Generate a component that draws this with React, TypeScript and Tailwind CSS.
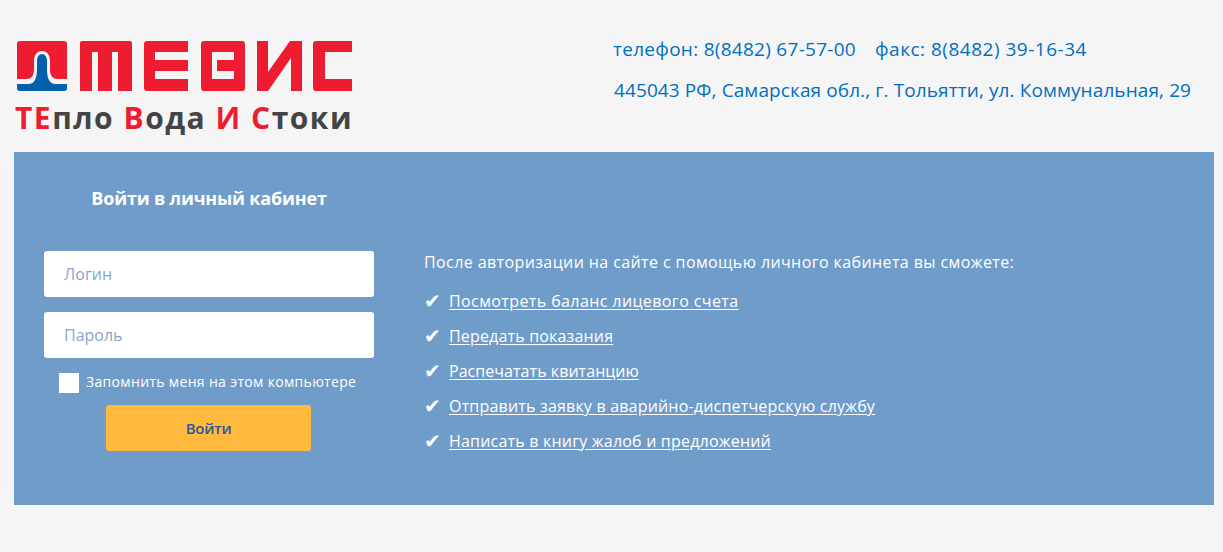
import React from "react";

function Logo() {
  return (
    <svg width="340" height="54" viewBox="15 39 340 54" className="block">
      {/* mark */}
      <rect x="17" y="41" width="50" height="50" rx="3" fill="#ee1c30" />
      <path d="M17 79 H26 C33 79 34 74 34 68 V61 C34 55 37 51 42 51 C47 51 50 55 50 61 V68 C50 74 51 79 58 79 H67 V88 Q67 91 64 91 H20 Q17 91 17 88 Z" fill="#f5f5f5" />
      <path d="M17 84 H28 C36 84 37 76 37 68 V61 C37 57 39 54 42 54 C45 54 47 57 47 61 V68 C47 76 48 84 56 84 H67 V88 Q67 91 64 91 H20 Q17 91 17 88 Z" fill="#0560ab" />
      {/* Т */}
      <path d="M82 41 H130 Q132 41 132 43 V91 H118 V52 H112 V91 H98 V52 H92 V91 H80 V43 Q80 41 82 41 Z" fill="#ee1c30" />
      {/* Е */}
      <path d="M147 41 H188 V52 H155 V60 H188 V71 H155 V79 H188 V91 H147 Q144 91 144 88 V44 Q144 41 147 41 Z" fill="#ee1c30" />
      {/* В */}
      <path fillRule="evenodd" d="M204 41 H242 Q245 41 245 44 V88 Q245 91 242 91 H204 Q201 91 201 88 V44 Q201 41 204 41 Z M212 52 V79 H234 V71 H217 V60 H234 V52 Z" fill="#ee1c30" />
      {/* И */}
      <path d="M257 41 H268 V72 L290 41 H302 V91 H291 V58 L268 91 H257 Z" fill="#ee1c30" />
      {/* С */}
      <path d="M316 41 H352 V52 H325 V79 H352 V91 H316 Q313 91 313 88 V44 Q313 41 316 41 Z" fill="#ee1c30" />
    </svg>
  );
}

function Item({ children, track }: { children: React.ReactNode; track: string }) {
  return (
    <li className="flex h-[35px] items-center">
      <span className="w-[25px] shrink-0 text-[20px] leading-[20px] font-['DejaVu_Sans',sans-serif]">✔</span>
      <a href="#" className={`text-[16px] leading-[20px] text-white underline underline-offset-2 ${track}`}>
        {children}
      </a>
    </li>
  );
}

export default function App() {
  return (
    <div className="min-h-[552px] bg-[#f5f5f5] font-['Open_Sans',sans-serif]">
      <header className="flex h-[152px]">
        <div className="w-[613px] shrink-0 pl-[15px] pt-[39px]">
          <Logo />
          <div className="mt-[7px] whitespace-nowrap text-[30px] font-bold leading-[36px] tracking-[1.5px] text-[#444]">
            <span className="text-[#ee1c30]">ТЕ</span>пло <span className="text-[#ee1c30]">В</span>ода{" "}
            <span className="text-[#ee1c30]">И</span> <span className="text-[#ee1c30]">С</span>токи
          </div>
        </div>
        <div className="whitespace-nowrap pt-[34px] text-[19px] leading-[30px] text-[#006fbe]">
          <div className="flex gap-[19px]">
            <span className="tracking-[0.28px]">телефон: 8(8482) 67-57-00</span>
            <span className="tracking-[0.5px]">факс: 8(8482) 39-16-34</span>
          </div>
          <div className="ml-px mt-[11px] tracking-[0.1px]">445043 РФ, Самарская обл., г. Тольятти, ул. Коммунальная, 29</div>
        </div>
      </header>
      <main className="ml-[14px] flex h-[353px] w-[1200px] bg-[#709cc9] pl-[30px] text-white">
        <section className="w-[330px] shrink-0">
          <h2 className="mt-[32px] h-[28px] text-center text-[18px] font-bold leading-[28px] tracking-[-0.2px]">Войти в личный кабинет</h2>
          <form className="mt-[39px]">
            <input
              placeholder="Логин"
              className="block h-[46px] w-full rounded-[3px] bg-white px-[20px] text-[16px] text-[#333] outline-none placeholder:text-[#8fa3cc]"
            />
            <input
              placeholder="Пароль"
              className="mt-[15px] block h-[46px] w-full rounded-[3px] bg-white px-[20px] text-[16px] text-[#333] outline-none placeholder:text-[#8fa3cc]"
            />
            <label className="mt-[15px] flex h-[20px] items-center pl-[15px]">
              <span className="h-[20px] w-[20px] shrink-0 bg-white" />
              <span className="ml-[7px] -translate-y-px whitespace-nowrap text-[14px] leading-[20px] tracking-[0.33px]">Запомнить меня на этом компьютере</span>
            </label>
            <button
              type="button"
              className="ml-[62px] mt-[12px] block h-[46px] w-[205px] rounded-[3px] bg-[#ffb93f] text-[15px] font-semibold tracking-[-0.3px] text-[#2a5a96]"
            >
              Войти
            </button>
          </form>
        </section>
        <section className="ml-[50px]">
          <p className="mt-[100px] h-[20px] whitespace-nowrap text-[16px] leading-[20px] tracking-[0.4px]">
            После авторизации на сайте с помощью личного кабинета вы сможете:
          </p>
          <ul className="mt-[11px]">
            <Item track="tracking-[0.4px]">Посмотреть баланс лицевого счета</Item>
            <Item track="tracking-[0.17px]">Передать показания</Item>
            <Item track="tracking-[0.05px]">Распечатать квитанцию</Item>
            <Item track="tracking-[0.19px]">Отправить заявку в аварийно-диспетчерскую службу</Item>
            <Item track="tracking-[0.2px]">Написать в книгу жалоб и предложений</Item>
          </ul>
        </section>
      </main>
    </div>
  );
}
